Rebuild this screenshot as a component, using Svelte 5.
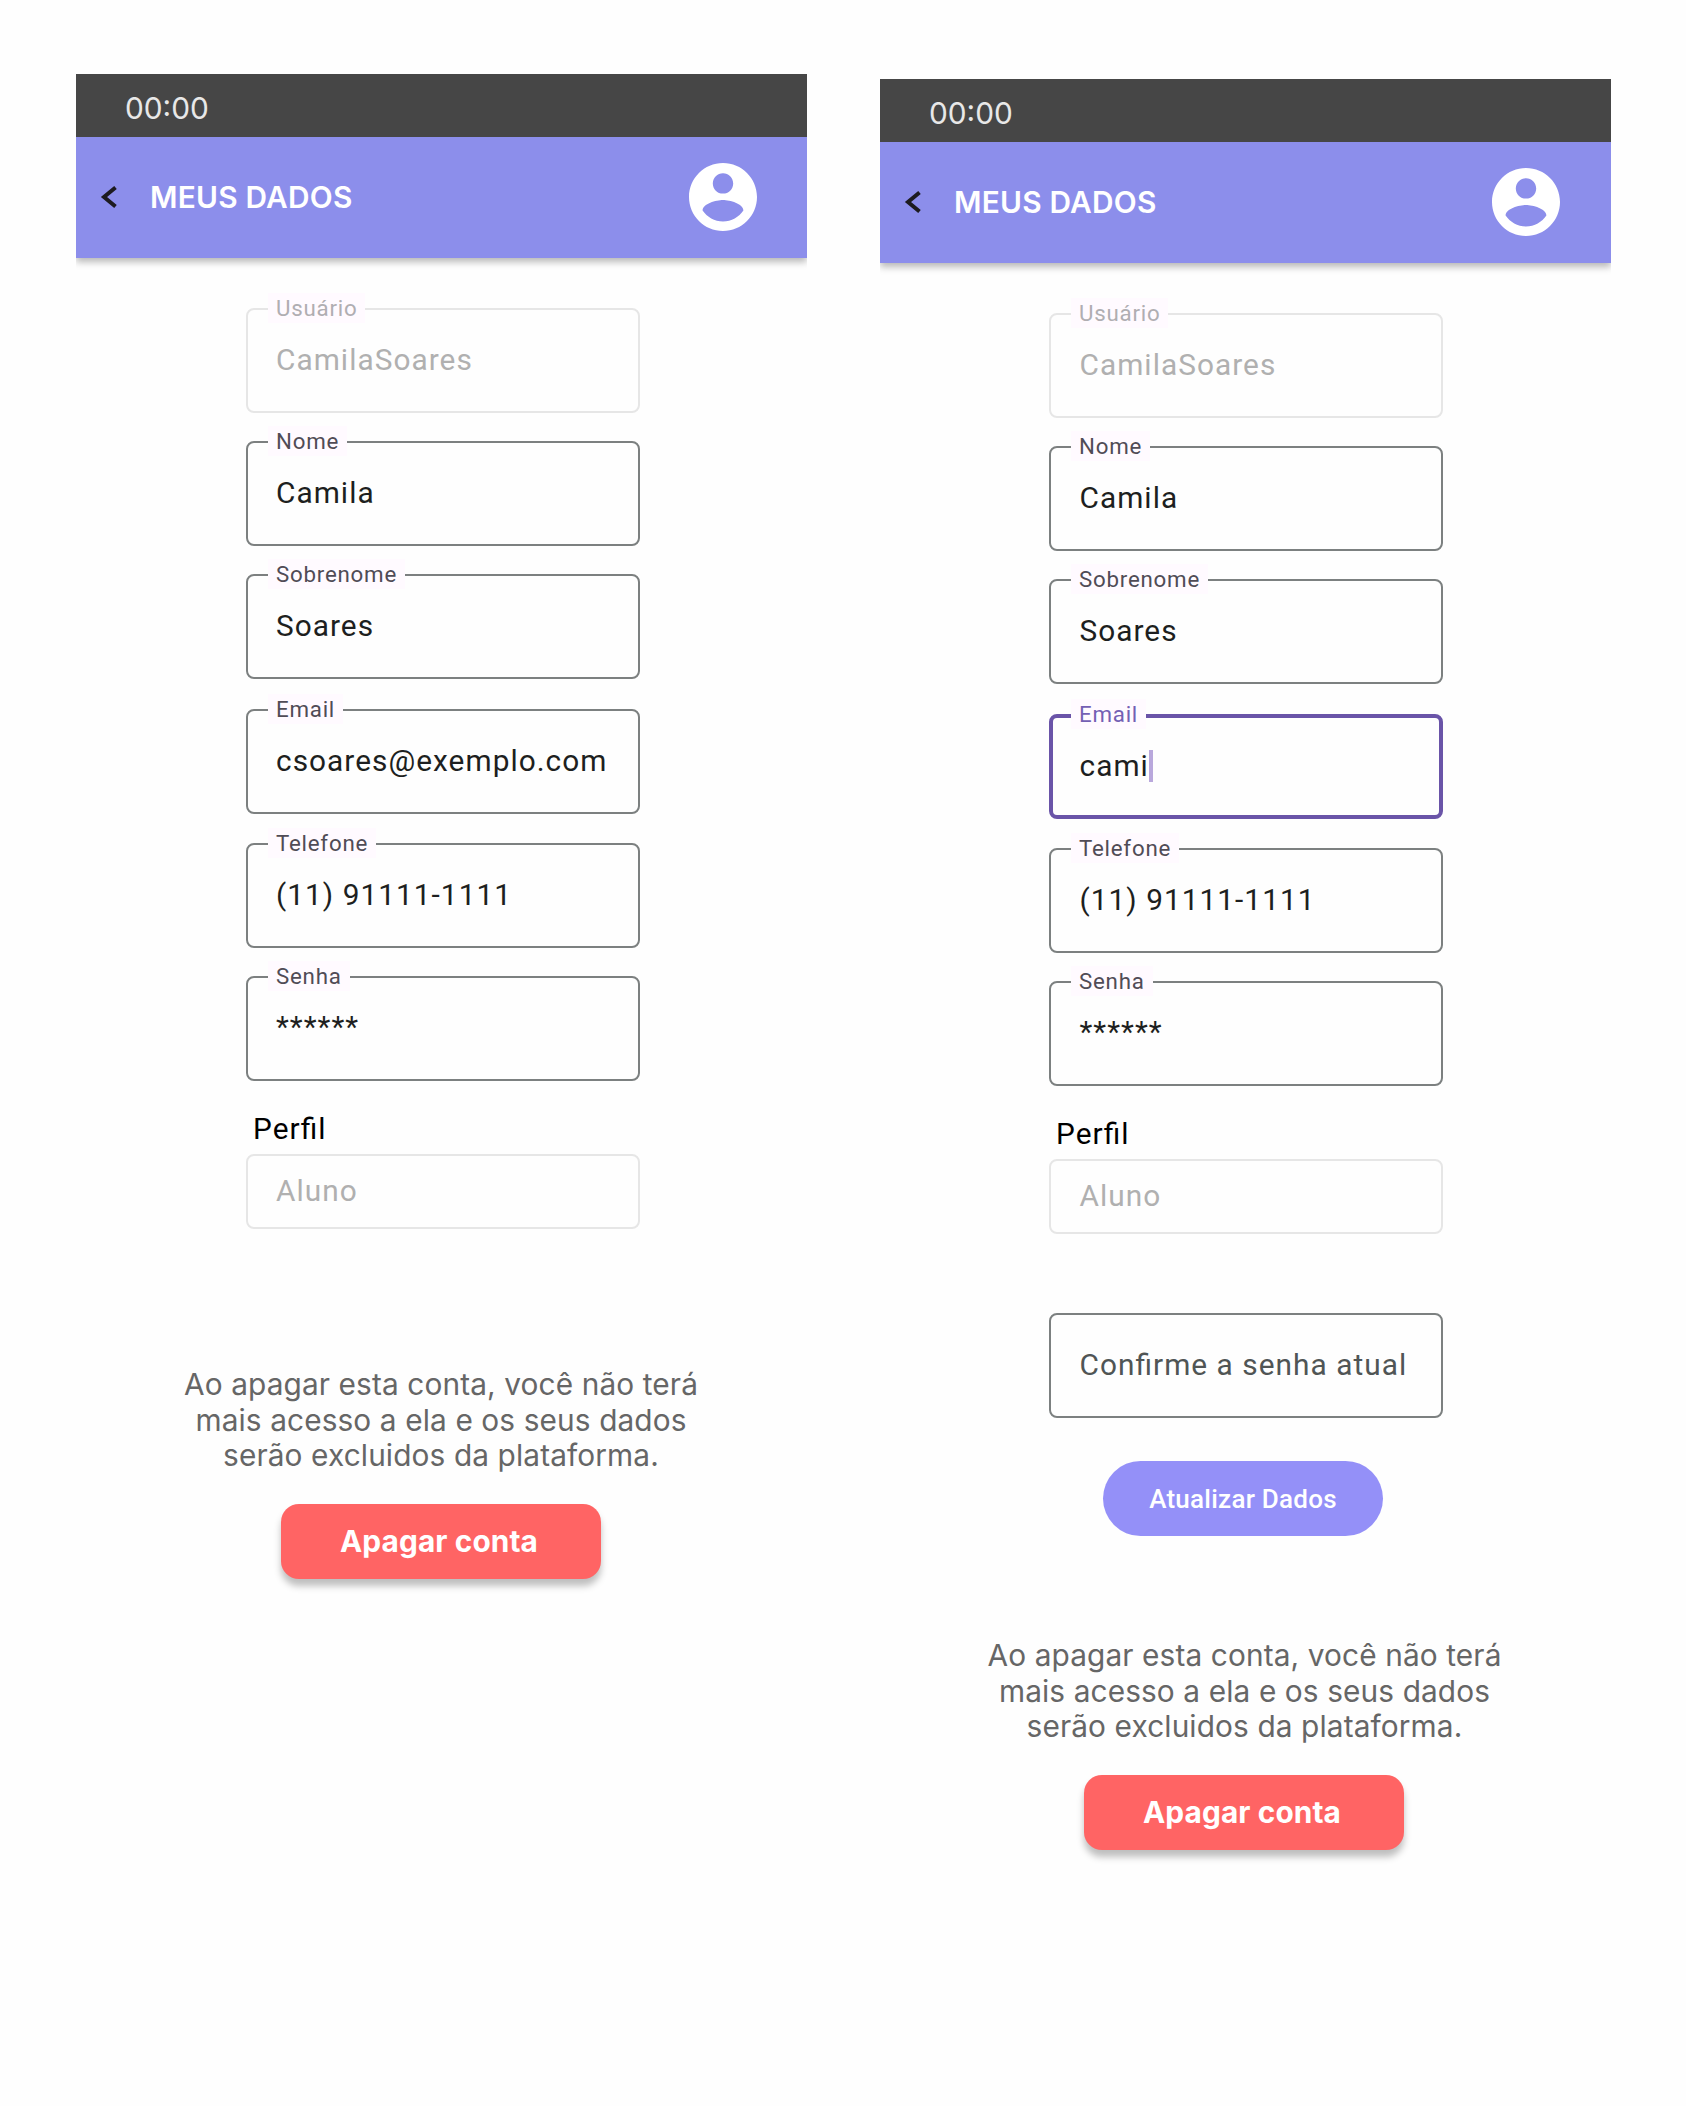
<script>
  const base = [
    { label: 'Usuário', value: 'CamilaSoares', disabled: true },
    { label: 'Nome', value: 'Camila' },
    { label: 'Sobrenome', value: 'Soares' },
    { label: 'Email', value: 'csoares@exemplo.com' },
    { label: 'Telefone', value: '(11) 91111-1111' },
    { label: 'Senha', value: '******', masked: true }
  ];
  const screens = [
    { editing: false, fields: base },
    {
      editing: true,
      fields: base.map((f) => (f.label === 'Email' ? { ...f, value: 'cami', focused: true } : f))
    }
  ];
</script>

<main>
  {#each screens as screen}
    <section class="phone" class:editing={screen.editing}>
      <div class="status">00:00</div>
      <header>
        <svg class="back" viewBox="0 0 18 24" aria-hidden="true">
          <path d="M15.5 2.5 4 12l11.5 9.5" />
        </svg>
        <h1>MEUS DADOS</h1>
        <svg class="avatar" viewBox="2 2 20 20" aria-hidden="true">
          <path d="M12 2C6.48 2 2 6.48 2 12s4.48 10 10 10 10-4.48 10-10S17.52 2 12 2zm0 3c1.66 0 3 1.34 3 3s-1.34 3-3 3-3-1.34-3-3 1.34-3 3-3zm0 14.2c-2.5 0-4.71-1.28-6-3.22.03-1.99 4-3.08 6-3.08 1.99 0 5.97 1.09 6 3.08-1.29 1.94-3.5 3.22-6 3.22z" />
        </svg>
      </header>

      <div class="form">
        {#each screen.fields as field}
          <div class="field" class:disabled={field.disabled} class:focused={field.focused} class:masked={field.masked}>
            <span class="label">{field.label}</span>
            <span class="value">{field.value}</span>{#if field.focused}<i class="caret"></i>{/if}
          </div>
        {/each}
        <div class="profile">Perfil</div>
        <div class="field short disabled"><span class="value">Aluno</span></div>
        {#if screen.editing}
          <div class="field confirm"><span class="value">Confirme a senha atual</span></div>
          <button class="update">Atualizar Dados</button>
        {/if}
      </div>

      <p>Ao apagar esta conta, você não terá<br />mais acesso a ela e os seus dados<br />serão excluidos da plataforma.</p>
      <button class="delete">Apagar conta</button>
    </section>
  {/each}
</main>

<style>
  :global(body) {
    margin: 0;
    background: #fefefe;
  }
  main {
    box-sizing: border-box;
    display: flex;
    gap: 73px;
    min-height: 2106px;
    padding: 74px 0 0 76px;
    font-family: Inter, sans-serif;
  }
  .phone {
    display: flex;
    flex-direction: column;
    align-items: center;
    width: 731px;
    flex: none;
  }
  .phone.editing {
    margin-top: 5px;
  }
  .status {
    box-sizing: border-box;
    align-self: stretch;
    height: 63px;
    padding-left: 49px;
    background: #464646;
    color: #e8e8e8;
    font-size: 29.8px;
    line-height: 68px;
  }
  header {
    box-sizing: border-box;
    align-self: stretch;
    display: flex;
    align-items: center;
    height: 121px;
    padding: 0 50px 1px 24px;
    background: #8c8eeb;
    box-shadow: 0 4px 7px rgba(0, 0, 0, 0.28);
    clip-path: inset(0 0 -20px 0);
  }
  .editing header {
    padding-right: 51px;
  }
  .back {
    width: 18px;
    height: 24px;
    fill: none;
    stroke: #1d1b20;
    stroke-width: 4;
  }
  h1 {
    flex: 1;
    margin: 0 0 0 32px;
    color: #fff;
    font-size: 29.8px;
    font-weight: 600;
    line-height: 36px;
    letter-spacing: 0.24px;
  }
  .avatar {
    width: 68px;
    height: 68px;
    fill: #fff;
  }
  .form {
    display: flex;
    flex-direction: column;
    width: 394px;
    padding-top: 50px;
    margin-left: 3px;
    font-family: Roboto, sans-serif;
  }
  .editing .form {
    margin-left: 1px;
  }
  .field {
    position: relative;
    box-sizing: border-box;
    display: flex;
    align-items: center;
    height: 105px;
    margin-bottom: 28px;
    padding: 0 0 2px 28px;
    border: 2px solid #7c8080;
    border-radius: 8px;
    color: #1d1f20;
  }
  .editing .field {
    padding-left: 28.5px;
  }
  .field:nth-child(3) {
    margin-bottom: 30px;
  }
  .field:nth-child(4) {
    margin-bottom: 29px;
  }
  .field.masked {
    padding-bottom: 4px;
  }
  .value {
    font-size: 29.8px;
    line-height: 44px;
    letter-spacing: 1.04px;
    white-space: pre;
    font-feature-settings: 'liga' 1;
  }
  .label {
    position: absolute;
    top: -17px;
    left: 20px;
    padding: 0 8px;
    background: #fffaff;
    color: #504c56;
    font-size: 22.3px;
    line-height: 30px;
    letter-spacing: 0.77px;
  }
  .disabled {
    border-color: #e6e6e6;
    color: #b0b0b0;
  }
  .disabled .label {
    color: #b0aeb2;
  }
  .editing .focused {
    padding-left: 26.5px;
    border: 4px solid #6a54a8;
  }
  .focused .label {
    top: -19px;
    left: 18px;
    color: #7460b4;
  }
  .caret {
    width: 4px;
    height: 32px;
    background: #b9a8dc;
  }
  .profile {
    height: 45px;
    padding-left: 7px;
    color: #000;
    font-size: 29.8px;
    line-height: 39px;
    letter-spacing: 1.04px;
    font-feature-settings: 'liga' 1;
  }
  .field.short {
    height: 75px;
    margin-bottom: 0;
    padding-bottom: 2px;
  }
  .field.confirm {
    margin: 79px 0 0;
    padding-bottom: 2px;
    color: #505555;
  }
  button {
    border: 0;
    padding: 0;
    color: #fff;
  }
  .update {
    width: 280px;
    height: 75px;
    margin: 43px 0 0 54px;
    border-radius: 38px;
    background: #9490f8;
    font: 500 26px/77px Roboto, sans-serif;
    letter-spacing: 0.25px;
  }
  p {
    margin: 138px 1px 0 0;
    color: #666;
    font-size: 29.8px;
    line-height: 35.7px;
    letter-spacing: 0.12px;
    text-align: center;
    white-space: nowrap;
  }
  .editing p {
    margin: 102px 2px 0 0;
  }
  .delete {
    width: 320px;
    height: 75px;
    margin: 30px 1px 0 0;
    padding-right: 4px;
    border-radius: 18px;
    background: #ff6464;
    box-shadow: 0 7px 7px rgba(0, 0, 0, 0.25);
    font: 700 29.8px/75px Inter, sans-serif;
    letter-spacing: 0.12px;
  }
  .editing .delete {
    margin-right: 3px;
  }
</style>
